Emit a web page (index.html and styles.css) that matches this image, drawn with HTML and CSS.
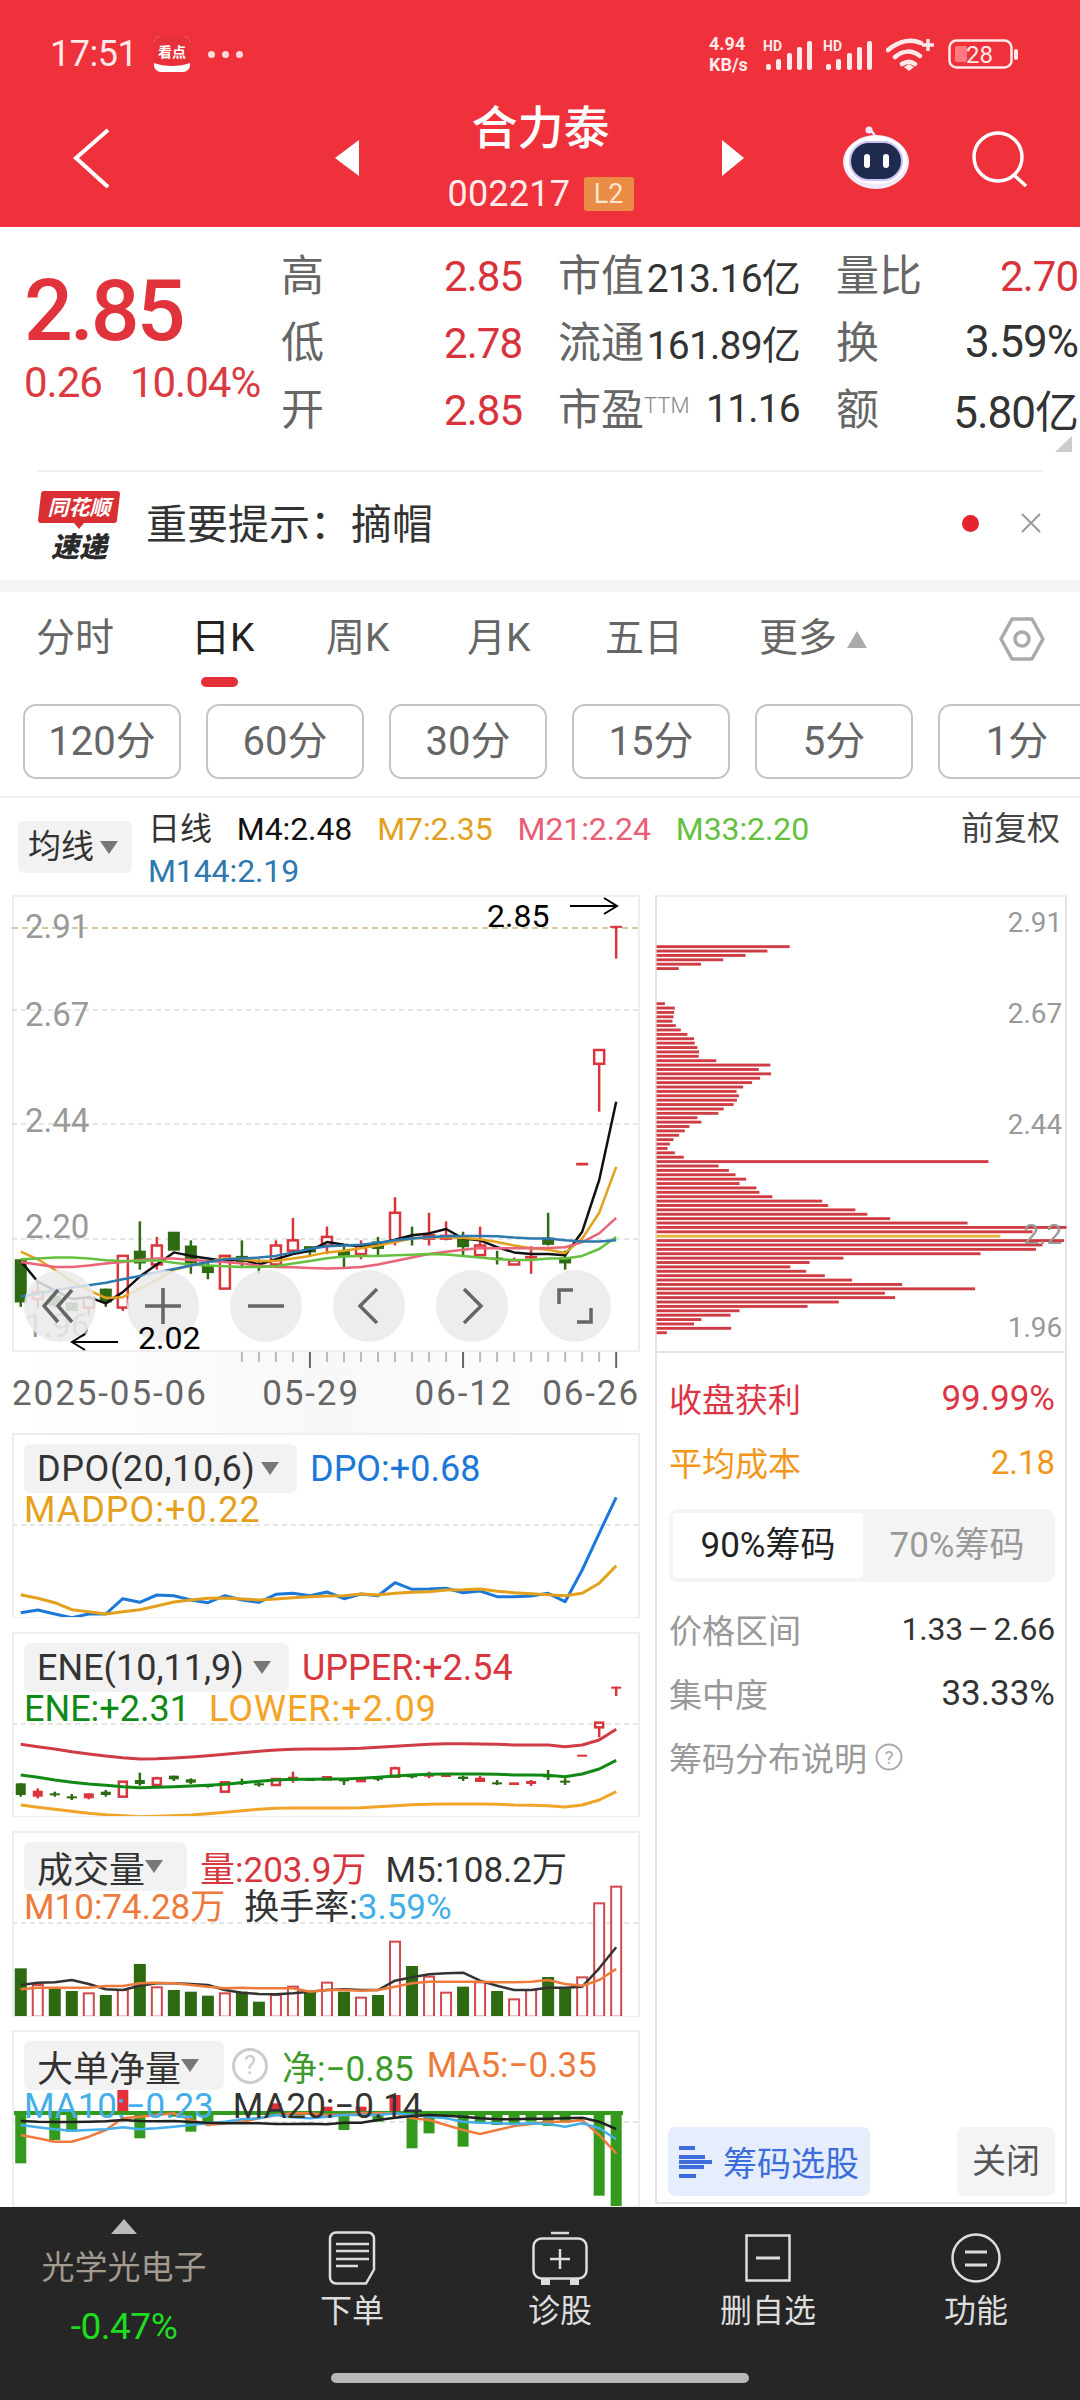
FILE: index.html
```html
<!DOCTYPE html>
<html lang="zh">
<head>
<meta charset="utf-8">
<title>合力泰</title>
<link rel="stylesheet" href="styles.css">
</head>
<body>
<div class="page">
  <header class="header">
    <div class="status">
      <span class="clock">17:51</span>
      <svg class="app-icon" width="36" height="36" viewBox="0 0 36 36"><rect width="36" height="36" rx="7" fill="#fff"/><path d="M0 7a7 7 0 0 1 7-7h22a7 7 0 0 1 7 7v20c-10 4-26 4-36 0z" fill="#e8303a"/><text x="18" y="21" class="app-text" text-anchor="middle">看点</text></svg>
      <span class="dots"><i></i><i></i><i></i></span>
      <span class="status-right">
        <span class="speed"><b>4.94</b><b>KB/s</b></span>
        <svg width="50" height="36" viewBox="0 -4 50 36"><text x="0" y="11" class="hd">HD</text><g fill="#ffe9ea"><rect x="3" y="24" width="5" height="6" rx="2"/><rect x="13" y="19" width="5" height="11" rx="2"/><rect x="24" y="13" width="5" height="17" rx="2"/><rect x="34" y="7" width="5" height="23" rx="2"/><rect x="44" y="1" width="5" height="29" rx="2"/></g></svg>
        <svg class="sig2" width="50" height="36" viewBox="0 -4 50 36"><text x="0" y="11" class="hd">HD</text><g fill="#ffe9ea"><rect x="3" y="24" width="5" height="6" rx="2"/><rect x="13" y="19" width="5" height="11" rx="2"/><rect x="24" y="13" width="5" height="17" rx="2"/><rect x="34" y="7" width="5" height="23" rx="2"/><rect x="44" y="1" width="5" height="29" rx="2"/></g></svg>
        <svg class="wifi" width="50" height="34" viewBox="0 0 50 34"><path d="M2 13C14 3 26 2 35 6M9 20c8-7 17-7 25-1M16 27c5-3 9-3 13 0" fill="none" stroke="#ffe9ea" stroke-width="4.5" stroke-linecap="round"/><path d="M18 30l5-3 5 3-5 4z" fill="#ffe9ea"/><path d="M42 2v12M36 8h12" stroke="#ffe9ea" stroke-width="3.5"/></svg>
        <svg class="battery" width="70" height="30" viewBox="0 0 70 30"><rect x="1.5" y="1.5" width="62" height="27" rx="7" fill="none" stroke="#ffe9ea" stroke-width="2.5"/><rect x="7" y="7" width="12" height="16" rx="2" fill="#ff7a80"/><text x="18" y="24" class="bat-text">28</text><rect x="66" y="10" width="4" height="11" rx="2" fill="#ffe9ea"/></svg>
      </span>
    </div>
    <div class="navbar">
      <svg class="back" width="37" height="61" viewBox="0 0 37 61"><path d="M35 2L3 30l32 29" fill="none" stroke="#fff" stroke-width="4"/></svg>
      <svg class="prev" width="24" height="36" viewBox="0 0 24 36"><path d="M24 0v36L0 18z" fill="#fff"/></svg>
      <div class="title-col">
        <div class="title">合力泰</div>
        <div class="code-row"><span class="code">002217</span><span class="l2">L2</span></div>
      </div>
      <svg class="next" width="22" height="36" viewBox="0 0 22 36"><path d="M0 0v36l22-18z" fill="#fff"/></svg>
      <svg class="robot" width="68" height="64" viewBox="0 0 68 64"><path d="M33 12c0-3-1-5-5-8" fill="none" stroke="#f1e8ff" stroke-width="2.5"/><circle cx="27" cy="4" r="3.5" fill="#f1e8ff"/><ellipse cx="34" cy="36" rx="33" ry="27" fill="#f0ecfb"/><ellipse cx="34" cy="34" rx="31" ry="24" fill="#fff"/><rect x="8" y="16" width="52" height="38" rx="19" fill="#1e2b4e" stroke="#c9c2f2" stroke-width="2"/><rect x="22" y="28" width="6" height="14" rx="3" fill="#fff"/><rect x="41" y="28" width="6" height="14" rx="3" fill="#fff"/></svg>
      <svg class="search" width="56" height="56" viewBox="0 0 56 56"><circle cx="26" cy="26" r="24" fill="none" stroke="#fff" stroke-width="3.5"/><path d="M42 44l12 11" stroke="#fff" stroke-width="3.5"/></svg>
    </div>
  </header>

  <section class="quote">
    <div class="price-block">
      <div class="price">2.85</div>
      <div class="change"><span>0.26</span><span>10.04%</span></div>
    </div>
    <div class="stats">
      <div class="stat"><span class="lab">高</span><span class="red">2.85</span></div>
      <div class="stat"><span class="lab">市值</span><span class="dark">213.16亿</span></div>
      <div class="stat"><span class="lab">量比</span><span class="red">2.70</span></div>
      <div class="stat"><span class="lab">低</span><span class="red">2.78</span></div>
      <div class="stat"><span class="lab">流通</span><span class="dark">161.89亿</span></div>
      <div class="stat"><span class="lab">换</span><span class="dark wide">3.59%</span></div>
      <div class="stat"><span class="lab">开</span><span class="red">2.85</span></div>
      <div class="stat"><span class="lab">市盈<sup class="ttm">TTM</sup></span><span class="dark">11.16</span></div>
      <div class="stat"><span class="lab">额</span><span class="dark wide">5.80亿</span></div>
    </div>
    <span class="corner"></span>
  </section>

  <section class="notice">
    <svg class="logo" width="84" height="78" viewBox="0 0 84 78"><path d="M7 0h73a3 3 0 0 1 3 3l-3 26a3 3 0 0 1-3 3H47l-5 6-5-6H4a3 3 0 0 1-3-3L4 3a3 3 0 0 1 3-3z" fill="#d92f32"/><text x="42" y="24" class="logo-top" text-anchor="middle">同花顺</text><text x="42" y="66" class="logo-bottom" text-anchor="middle">速递</text></svg>
    <span class="notice-text">重要提示：摘帽</span>
    <span class="notice-dot"></span>
    <svg class="notice-x" width="22" height="22" viewBox="0 0 22 22"><path d="M2 2l18 18M20 2L2 20" stroke="#999" stroke-width="2"/></svg>
  </section>
  <div class="band"></div>

  <nav class="tabs">
    <span class="tab">分时</span>
    <span class="tab active">日K</span>
    <span class="tab">周K</span>
    <span class="tab">月K</span>
    <span class="tab">五日</span>
    <span class="tab">更多<i class="up-tri"></i></span>
    <svg class="gear" width="46" height="44" viewBox="0 0 46 44"><path d="M13 2h20l11 20-11 20H13L2 22z" fill="none" stroke="#aaa" stroke-width="3.5" stroke-linejoin="round"/><circle cx="23" cy="22" r="7" fill="none" stroke="#aaa" stroke-width="3.5"/></svg>
  </nav>
  <div class="pills">
    <span class="pill">120分</span><span class="pill">60分</span><span class="pill">30分</span><span class="pill">15分</span><span class="pill">5分</span><span class="pill">1分</span>
  </div>

  <div class="legend">
    <span class="ma-pill">均线<i class="tri"></i></span>
    <div class="ma-values">
      <div class="ma-line"><span class="c-dark">日线</span><span class="c-black">M4:2.48</span><span class="c-m7">M7:2.35</span><span class="c-m21">M21:2.24</span><span class="c-m33">M33:2.20</span></div>
      <div class="ma-line"><span class="c-m144">M144:2.19</span></div>
    </div>
    <span class="adjust">前复权</span>
  </div>

  <div class="content">
    <div class="left-col">
      <div class="main-chart">
        <svg id="main" class="chart-svg" width="628" height="457" viewBox="12 895 628 457">
          <text x="25" y="938" class="axis">2.91</text>
          <text x="25" y="1026" class="axis">2.67</text>
          <text x="25" y="1132" class="axis">2.44</text>
          <text x="25" y="1238" class="axis">2.20</text>
          <text x="25" y="1337" class="axis">1.96</text>
          <text x="487" y="927" class="mark">2.85</text>
          <path d="M570 906h46m-12-8l13 8-13 8" fill="none" stroke="#000" stroke-width="2"/>
        </svg>
        <div class="chart-btns">
          <span class="cbtn"><svg width="36" height="36" viewBox="0 0 36 36"><path d="M16 2L2 18l14 16M30 2L16 18l14 16" fill="none" stroke="#666" stroke-width="3.5"/></svg></span>
          <span class="cbtn"><svg width="36" height="36" viewBox="0 0 36 36"><path d="M18 0v36M0 18h36" stroke="#666" stroke-width="3.5"/></svg></span>
          <span class="cbtn"><svg width="36" height="36" viewBox="0 0 36 36"><path d="M0 18h36" stroke="#666" stroke-width="3.5"/></svg></span>
          <span class="cbtn"><svg width="36" height="36" viewBox="0 0 36 36"><path d="M26 1L9 18l17 17" fill="none" stroke="#666" stroke-width="3.5"/></svg></span>
          <span class="cbtn"><svg width="36" height="36" viewBox="0 0 36 36"><path d="M10 1l17 17-17 17" fill="none" stroke="#666" stroke-width="3.5"/></svg></span>
          <span class="cbtn"><svg width="36" height="36" viewBox="0 0 36 36"><path d="M16 2H2v14M20 34h14V20" fill="none" stroke="#666" stroke-width="3.5"/></svg></span>
        </div>
        <svg class="chart-svg low-mark" width="628" height="470" viewBox="12 895 628 470">
          <text x="138" y="1349" class="mark">2.02</text>
          <path d="M118 1342H73m12-8l-13 8 13 8" fill="none" stroke="#000" stroke-width="2"/>
        </svg>
      </div>
      <div class="date-axis">
        <svg id="ticks" class="ticks" width="628" height="18" viewBox="12 1352 628 18"></svg>
        <div class="dates"><span class="d1">2025-05-06</span><span class="d2">05-29</span><span class="d3">06-12</span><span class="d4">06-26</span></div>
      </div>

      <div class="panel p-dpo">
        <svg id="dpo" class="chart-svg" width="628" height="185" viewBox="12 1433 628 185"></svg>
        <div class="plg">
          <div class="plg-row"><span class="ind-pill pw-dpo">DPO(20,10,6)<i class="tri"></i></span><span class="c-blue">DPO:+0.68</span></div>
          <div class="plg-row2"><span class="c-orange tracked">MADPO:+0.22</span></div>
        </div>
      </div>
      <div class="panel p-ene">
        <svg id="ene" class="chart-svg" width="628" height="185" viewBox="12 1632 628 185"></svg>
        <div class="plg">
          <div class="plg-row"><span class="ind-pill pw-ene">ENE(10,11,9)<i class="tri"></i></span><span class="c-red">UPPER:+2.54</span></div>
          <div class="plg-row2"><span class="c-green">ENE:+2.31</span><span class="c-lower tracked">LOWER:+2.09</span></div>
        </div>
      </div>
      <div class="panel p-vol">
        <svg id="vol" class="chart-svg" width="628" height="186" viewBox="12 1831 628 186"></svg>
        <div class="plg plg-tight">
          <div class="plg-row"><span class="ind-pill pw-vol">成交量<i class="tri"></i></span><span class="c-red">量:203.9万</span><span class="c-dark m5">M5:108.2万</span></div>
          <div class="plg-row2"><span class="c-m10">M10:74.28万</span><span class="c-dark">换手率:<span class="c-sky">3.59%</span></span></div>
        </div>
      </div>
      <div class="panel p-net">
        <svg id="net" class="chart-svg" width="628" height="177" viewBox="12 2030 628 177"></svg>
        <div class="plg plg-tight">
          <div class="plg-row"><span class="ind-pill pw-net">大单净量<i class="tri"></i></span><svg class="qmark" width="38" height="38" viewBox="0 0 38 38"><circle cx="19" cy="19" r="16.5" fill="none" stroke="#ccc" stroke-width="3"/><text x="19" y="27" class="q-text" text-anchor="middle">?</text></svg><span class="c-net">净:−0.85</span><span class="c-m10">MA5:−0.35</span></div>
          <div class="plg-row2"><span class="c-sky2">MA10:−0.23</span><span class="c-dark">MA20:−0.14</span></div>
        </div>
      </div>
    </div>

    <aside class="right-col">
      <svg id="chips" class="chips" width="412" height="456" viewBox="655 895 412 456"></svg>
      <div class="info">
        <div class="info-row profit"><span>收盘获利</span><span class="num">99.99%</span></div>
        <div class="info-row cost"><span>平均成本</span><span>2.18</span></div>
        <div class="segment"><span class="seg on">90%筹码</span><span class="seg">70%筹码</span></div>
        <div class="info-row plain"><span>价格区间</span><span class="v range">1.33 – 2.66</span></div>
        <div class="info-row plain"><span>集中度</span><span class="v num">33.33%</span></div>
        <div class="info-row plain note"><span>筹码分布说明</span><svg width="28" height="28" viewBox="0 0 28 28"><circle cx="14" cy="14" r="12.5" fill="none" stroke="#aaa" stroke-width="2"/><text x="14" y="21" class="q-small" text-anchor="middle">?</text></svg></div>
      </div>
      <div class="actions">
        <span class="pick"><svg width="34" height="32" viewBox="0 0 34 32"><g fill="#3d6ddb"><rect width="16" height="4"/><rect y="9" width="26" height="4"/><rect y="14" width="33" height="4"/><rect y="19" width="25" height="4"/><rect y="28" width="17" height="4"/></g></svg>筹码选股</span>
        <span class="close">关闭</span>
      </div>
    </aside>
  </div>

  <footer class="bottom">
    <div class="bottom-row">
      <div class="sector"><i class="sector-tri"></i><span class="sector-name">光学光电子</span><span class="sector-pct">-0.47%</span></div>
      <div class="act">
        <svg width="48" height="54" viewBox="0 0 48 54"><path d="M8 1.5h32a6 6 0 0 1 6 6v31l-8 14H8a6 6 0 0 1-6-6v-39a6 6 0 0 1 6-6z" fill="none" stroke="#ddd" stroke-width="2.5"/><path d="M8 13h33M8 20h33M8 28h33M8 35h22" stroke="#ddd" stroke-width="2.5"/></svg>
        <span>下单</span>
      </div>
      <div class="act">
        <svg width="56" height="54" viewBox="0 0 56 54"><path d="M19 2h18" stroke="#ddd" stroke-width="2.5"/><rect x="1.5" y="7.5" width="53" height="40" rx="8" fill="none" stroke="#ddd" stroke-width="2.5"/><path d="M28 18v20M18 28h20" stroke="#ddd" stroke-width="2.5"/><path d="M9 48h9v6H9zM38 48h9v6h-9z" fill="#ddd"/></svg>
        <span>诊股</span>
      </div>
      <div class="act">
        <svg width="46" height="54" viewBox="0 0 46 54"><rect x="1.5" y="4.5" width="43" height="45" fill="none" stroke="#ddd" stroke-width="2.5"/><path d="M11 27h24" stroke="#ddd" stroke-width="3"/></svg>
        <span>删自选</span>
      </div>
      <div class="act">
        <svg width="50" height="54" viewBox="0 0 50 54"><circle cx="25" cy="27" r="23.5" fill="none" stroke="#ddd" stroke-width="2.5"/><path d="M14 21h22M14 34h22" stroke="#ddd" stroke-width="3"/></svg>
        <span>功能</span>
      </div>
    </div>
    <div class="home-bar"></div>
  </footer>
</div>
<script src="chart.js"></script>
</body>
</html>
```

FILE: styles.css
```css
* { box-sizing: border-box; }
html, body { margin: 0; padding: 0; background: #fff; }
body { font-family: Roboto, "Noto Sans CJK SC", sans-serif; color: #333; }
.page { width: 1080px; height: 2400px; overflow: hidden; position: relative; background: #fff; }
i { font-style: normal; }

/* header */
.header { height: 227px; background: #ee313b; color: #fff; }
.status { height: 100px; padding: 8px 0 0 50px; display: flex; align-items: center; }
.clock { font-size: 36px; color: #ffe9ea; width: 104px; letter-spacing: -.5px; }
.app-icon { margin-right: 18px; }
.app-text { font: 700 14px "Noto Sans CJK SC", sans-serif; fill: #fff; }
.dots { display: flex; gap: 7px; }
.dots i { width: 7px; height: 7px; border-radius: 50%; background: #ffd9dc; }
.status-right { margin-left: auto; display: flex; align-items: center; padding-right: 62px; }
.speed { display: flex; flex-direction: column; font-size: 18px; line-height: 21px; width: 54px; color: #ffe9ea; }
.speed b { font-weight: 700; }
.hd { font: 700 14px Roboto, sans-serif; fill: #ffe9ea; }
.sig2 { margin-left: 10px; }
.wifi { margin-left: 13px; }
.battery { margin-left: 12px; }
.bat-text { font: 400 24px Roboto, sans-serif; fill: #ffe9ea; }
.navbar { height: 127px; padding: 0 0 11px 73px; display: flex; align-items: center; }
.prev { margin-left: 225px; }
.title-col { width: 363px; align-self: stretch; display: flex; flex-direction: column; align-items: center; }
.title { font-size: 46px; font-weight: 500; line-height: 56px; }
.code-row { display: flex; align-items: center; margin-top: 21px; height: 34px; }
.code { font-size: 36px; width: 136px; letter-spacing: .2px; color: #ffecec; }
.l2 { width: 50px; height: 34px; background: #e98c45; border-radius: 3px; font-size: 27px; line-height: 34px; text-align: center; color: #ffe3d0; }
.robot { margin-left: 98px; }
.search { margin-left: 62px; margin-top: 2px; }

/* quote */
.quote { height: 243px; display: flex; padding-top: 16px; position: relative; }
.price-block { width: 281px; padding-left: 24px; }
.price { font-size: 86px; font-weight: 500; line-height: 90px; color: #e0333b; margin-top: 23px; letter-spacing: -3px; }
.change { display: flex; gap: 28px; font-size: 42px; color: #dc3a42; margin-top: 4px; line-height: 46px; letter-spacing: -1px; }
.stats { width: 799px; display: grid; grid-template-columns: 241px 242px 242px; column-gap: 36px; grid-auto-rows: 67px; }
.stat { display: flex; justify-content: space-between; align-items: center; font-size: 39px; letter-spacing: -.8px; white-space: nowrap; }
.lab { font-size: 43px; color: #666; letter-spacing: 0; margin-bottom: 9px; }
.ttm { font-size: 22px; color: #888; vertical-align: 12px; line-height: 0; font-weight: 300; }
.stat .red { color: #d8333c; font-size: 42px; letter-spacing: -1px; }
.dark { color: #333; margin-bottom: 4px; }
.stat .wide { font-size: 44px; letter-spacing: -1px; }
.corner { position: absolute; right: 8px; bottom: 18px; width: 0; height: 0; border-left: 17px solid transparent; border-bottom: 16px solid #ccc; }
.notice { height: 110px; margin: 0 37px; border-top: 2px solid #eee; padding-bottom: 6px; display: flex; align-items: center; }
.logo { margin: 14px 25px 0 0; }
.logo-top { font: italic 700 21px "Noto Sans CJK SC", sans-serif; fill: #fff; }
.logo-bottom { font: italic 900 28px "Noto Sans CJK SC", sans-serif; fill: #2a2a2a; }
.notice-text { font-size: 41px; color: #333; margin-bottom: 4px; }
.notice-dot { width: 17px; height: 17px; border-radius: 50%; background: #e5252e; margin-left: auto; margin-right: 41px; }
.notice-x { margin-right: 1px; }
.band { height: 12px; background: #f5f5f5; }

/* tabs */
.tabs { height: 112px; display: grid; grid-template-columns: 155px 135px 141px 138px 154px 240px 46px; padding-left: 36px; padding-top: 23px; align-items: start; position: relative; }
.tab { font-size: 39px; line-height: 46px; color: #666; position: relative; white-space: nowrap; }
.tab.active { color: #222; }
.tab.active::after { content: ""; position: absolute; left: 10px; top: 62px; width: 37px; height: 10px; border-radius: 5px; background: #e5303a; }
.up-tri { display: inline-block; width: 0; height: 0; border-left: 10px solid transparent; border-right: 10px solid transparent; border-bottom: 17px solid #aaa; margin-left: 10px; vertical-align: 3px; }
.gear { margin-top: 2px; }
.pills { height: 94px; border-bottom: 2px solid #eee; padding-left: 23px; display: flex; gap: 25px; overflow: hidden; }
.pill { flex: 0 0 158px; height: 75px; border: 2px solid #c4c4c4; border-radius: 13px; text-align: center; font-size: 40px; line-height: 72px; color: #666; }

/* legend */
.legend { height: 97px; display: flex; position: relative; }
.ma-pill { margin: 23px 0 0 18px; width: 114px; height: 52px; background: #f2f2f2; border-radius: 6px; font-size: 33px; line-height: 50px; padding-left: 10px; color: #333; display: flex; align-items: center; gap: 4px; }
.tri { display: inline-block; width: 0; height: 0; border-left: 9px solid transparent; border-right: 9px solid transparent; border-top: 13px solid #777; margin-left: 8px; }
.ma-pill .tri { margin-left: 2px; }
.ma-values { margin: 10px 0 0 16px; font-size: 32px; line-height: 42px; letter-spacing: -.1px; }
.ma-line { display: flex; gap: 25px; }
.adjust { margin: 10px 20px 0 auto; font-size: 33px; line-height: 42px; color: #444; }
.c-dark { color: #333; }
.c-black { color: #111; }
.c-m7 { color: #e2a01c; }
.c-m21 { color: #ea5e75; }
.c-m33 { color: #66c040; }
.c-m144 { color: #2d78ae; }
.c-blue { color: #1c78d8; }
.c-orange { color: #e5a11c; }
.c-red { color: #d8363e; }
.c-green { color: #118a15; }
.c-lower { color: #f5a324; }
.c-m10 { color: #ee7a3c; }
.c-sky { color: #44aee8; }
.c-sky2 { color: #44aee8; }
.c-net { color: #3c9a2a; }

/* content */
.content { display: flex; padding-left: 12px; gap: 15px; height: 1312px; }
.left-col { width: 628px; }
.main-chart { height: 457px; position: relative; border: 2px solid #eee; }
.chart-svg { position: absolute; left: -2px; top: -2px; display: block; }
.low-mark { overflow: visible; pointer-events: none; }
.chart-btns { position: absolute; left: 10px; top: 373px; display: flex; gap: 31px; }
.cbtn { width: 72px; height: 72px; border-radius: 50%; background: rgba(234,234,234,.86); display: flex; align-items: center; justify-content: center; }
.axis { font: 400 33px Roboto, sans-serif; fill: #999; }
.mark { font: 400 32px Roboto, sans-serif; fill: #000; }
.date-axis { height: 81px; background: linear-gradient(90deg, #fff 0, #f8f8f8 50%, #fff 100%); }
.ticks { display: block; }
.dates { display: flex; font-size: 35px; line-height: 40px; color: #666; margin-top: 4px; letter-spacing: 1.9px; white-space: nowrap; }
.d1 { margin-left: 0; width: 251px; }
.d2 { width: 153px; }
.d3 { width: 128px; }
.panel { position: relative; border: 2px solid #eee; border-bottom-width: 1px; overflow: hidden; }
.p-dpo, .p-ene { height: 185px; margin-bottom: 14px; }
.p-vol { height: 186px; margin-bottom: 13px; }
.p-net { height: 177px; }
.plg { position: relative; padding: 9px 0 0 10px; font-size: 36px; white-space: nowrap; }
.plg-tight { font-size: 35px; }
.plg-row { display: flex; align-items: center; gap: 13px; height: 49px; }
.plg-row2 { display: flex; gap: 19px; height: 36px; line-height: 36px; margin-top: -1px; }
.tracked { letter-spacing: 1px; }
.ind-pill { height: 49px; background: #f2f2f2; border-radius: 7px; padding-left: 13px; display: flex; align-items: center; color: #333; font-size: 36px; }
.pw-dpo { width: 273px; letter-spacing: .6px; }
.pw-ene { width: 265px; }
.pw-vol { width: 163px; }
.pw-net { width: 200px; }
.pw-vol .tri, .pw-net .tri { margin-left: 0; }
.pw-dpo .tri { margin-left: 5px; }
.pw-ene .tri { margin-left: 9px; }
.m5 { margin-left: 6px; }
.qmark { margin-left: -6px; }
.q-text { font: 400 25px Roboto, sans-serif; fill: #ccc; }
.q-small { font: 400 19px Roboto, sans-serif; fill: #aaa; }

/* right */
.right-col { width: 412px; height: 1309px; border: 2px solid #e4e4e4; border-top-color: #eee; display: flex; flex-direction: column; }
.chips { display: block; flex: none; margin-left: -2px; border-bottom: 2px solid #e4e4e4; height: 456px; }
.info { padding: 13px 10px 0 12px; }
.info-row { display: flex; justify-content: space-between; align-items: center; height: 64px; font-size: 33px; }
.profit { color: #dc3545; }
.cost { color: #f3971c; }
.plain { color: #999; height: 64px; }
.plain .v { color: #333; }
.num { font-size: 35px; }
.range { font-size: 32px; word-spacing: -3px; letter-spacing: -.2px; }
.note { justify-content: flex-start; gap: 8px; }
.segment { margin: 15px 0; height: 73px; background: #f4f4f4; border-radius: 9px; padding: 4px; display: flex; font-size: 35px; color: #999; }
.seg { flex: 1; text-align: center; line-height: 65px; }
.seg.on { flex: 0 0 190px; background: #fff; border-radius: 4px; color: #222; }
.actions { margin-top: auto; padding: 0 10px 6px 11px; display: flex; justify-content: space-between; font-size: 34px; }
.pick { width: 202px; height: 69px; background: #e6edfd; border-radius: 7px; color: #3d6ddb; display: flex; align-items: center; justify-content: center; gap: 10px; }
.close { width: 98px; height: 69px; background: #f4f4f4; border-radius: 7px; color: #555; text-align: center; line-height: 68px; }

/* bottom */
.bottom { position: absolute; left: 0; right: 0; bottom: 0; height: 193px; background: #262626; }
.bottom-row { height: 166px; display: flex; }
.sector { width: 248px; display: flex; flex-direction: column; align-items: center; padding-top: 12px; }
.sector-tri { width: 0; height: 0; border-left: 13px solid transparent; border-right: 13px solid transparent; border-bottom: 15px solid #bbb; }
.sector-name { font-size: 33px; line-height: 44px; color: #a39a90; margin-top: 12px; }
.sector-pct { font-size: 37px; line-height: 44px; color: #1fdc1f; margin-top: 15px; letter-spacing: -.5px; }
.act { width: 208px; display: flex; flex-direction: column; align-items: center; padding-top: 24px; color: #ddd; font-size: 32px; line-height: 40px; }
.act svg { display: block; height: 54px; }
.act span { margin-top: 6px; }
.home-bar { width: 418px; height: 10px; margin: 0 auto; background: #b8b8b8; border-radius: 5px; }

/* chips */
.chip { fill: #cf3c44; }
.chip.avg { fill: #e8b23c; }
.chip-label { font: 400 28px Roboto, sans-serif; fill: #999; text-anchor: end; }
```

FILE: chart.js
```js
(function () {
  var NS = 'http://www.w3.org/2000/svg';
  var GREEN = '#2e6a12', RED = '#d8353d';
  function el(tag, attrs, parent, before) {
    var e = document.createElementNS(NS, tag);
    for (var k in attrs) e.setAttribute(k, attrs[k]);
    if (before) parent.insertBefore(e, before); else parent.appendChild(e);
    return e;
  }
  function X(i) { return (50 + 41 * i) / 2.41; }
  function line(svg, ys, toY, color, w, before) {
    var pts = ys.map(function (z, i) { return X(i).toFixed(1) + ',' + toY(z).toFixed(1); }).join(' ');
    el('polyline', { points: pts, fill: 'none', stroke: color, 'stroke-width': w, 'stroke-linejoin': 'round' }, svg, before);
  }
  function dash(svg, y, color, before) {
    el('path', { d: 'M12 ' + y + 'H640', stroke: color, 'stroke-width': 1.5, 'stroke-dasharray': '5 4' }, svg, before);
  }
  function candles(svg, data, toY, bw, before) {
    data.forEach(function (c, i) {
      var x = X(i), col = c[0] === 'g' ? GREEN : RED;
      var t = toY(c[1]), b = toY(c[2]);
      if (c[3] !== undefined) el('path', { d: 'M' + x + ' ' + toY(c[3]) + 'V' + toY(c[4]), stroke: col, 'stroke-width': 2.5 }, svg, before);
      if (c[0] === 'r') {
        el('rect', { x: x - bw / 2 + 1, y: t, width: bw - 2, height: Math.max(b - t, 1), fill: '#fff', stroke: col, 'stroke-width': 2.5 }, svg, before);
      } else {
        el('rect', { x: x - bw / 2, y: t, width: bw, height: Math.max(b - t, 2), fill: col }, svg, before);
      }
    });
  }

  /* main K chart */
  var main = document.getElementById('main');
  var firstText = main.firstElementChild;
  var mainY = function (z) { return 880 + z / 2.9; };
  el('path', { d: 'M12 928H640', stroke: '#c9b57f', 'stroke-width': 1.5, 'stroke-dasharray': '6 4' }, main, firstText);
  dash(main, 1010, '#ddd', firstText); dash(main, 1124, '#ddd', firstText); dash(main, 1239, '#ddd', firstText);
  var K = [['g',1100,1225,1100,1238],['r',1195,1215,1165,1240],['g',1205,1235,1190,1240],['g',1225,1250,1225,1250],['r',1212,1240,1205,1265],['g',1185,1225,1185,1238],['r',1090,1240,1090,1250],['g',1075,1112,990,1130],['r',1060,1115,1035,1130],['g',1020,1075],['g',1060,1112,1045,1142],['g',1118,1140,1100,1158],['r',1090,1185],['g',1090,1108,1045,1125],['g',1118,1123,1100,1142],['r',1060,1115,1045,1115],['r',1045,1075,980,1075],['g',1062,1080,1062,1088],['r',1035,1060,1005,1085],['g',1075,1090,1060,1125],['r',1060,1085,1045,1100],['g',1048,1070,1035,1088],['r',965,1045,920,1060],['g',1035,1040,1005,1060],['r',1030,1040,965,1060],['r',1032,1040,990,1045],['g',1038,1065,1020,1090],['r',1060,1088,1005,1090],['g',1095,1100,1075,1115],['r',1103,1115,1095,1115],['f',1090,1098,1062,1142],['g',1037,1058,965,1060],['g',1095,1112,1075,1130],['f',820,828],['r',493,533,533,672],['f',133,137,133,228]];
  candles(main, K, mainY, 12, firstText);
  line(main, [1105,1165,1190,1215,1210,1228,1195,1150,1115,1080,1090,1098,1105,1100,1115,1100,1085,1075,1050,1058,1062,1055,1043,1030,1025,1012,1040,1045,1065,1080,1085,1085,1088,1020,870,643], mainY, '#111', 2.5, firstText);
  line(main, [1078,1100,1130,1165,1190,1212,1210,1185,1160,1130,1118,1108,1097,1100,1105,1105,1098,1090,1080,1075,1068,1060,1050,1040,1037,1035,1038,1042,1050,1060,1068,1072,1082,1040,965,832], mainY, '#e2a01c', 2.5, firstText);
  line(main, [1108,1115,1122,1122,1118,1112,1108,1102,1098,1098,1102,1105,1108,1112,1118,1122,1123,1125,1127,1125,1122,1115,1105,1095,1085,1078,1072,1067,1068,1068,1068,1067,1065,1050,1025,980], mainY, '#ea6378', 2.5, firstText);
  line(main, [1100,1098,1095,1095,1098,1103,1105,1105,1103,1110,1115,1118,1120,1122,1122,1120,1112,1105,1097,1092,1090,1090,1088,1087,1085,1086,1090,1095,1100,1102,1102,1098,1098,1090,1070,1035], mainY, '#66c040', 2.5, firstText);
  line(main, [1208,1200,1190,1182,1175,1168,1158,1148,1138,1128,1118,1108,1100,1098,1095,1090,1080,1070,1062,1060,1058,1052,1045,1040,1035,1033,1032,1032,1033,1037,1040,1040,1045,1048,1048,1045], mainY, '#2d78ae', 2.5, firstText);

  /* date ticks */
  var ticks = document.getElementById('ticks');
  for (var t = 13; t < 36; t++) {
    var big = t === 17 || t === 26 || t === 35;
    el('path', { d: 'M' + X(t) + ' 1352V' + (big ? 1368 : 1362), stroke: big ? '#666' : '#bbb', 'stroke-width': 2 }, ticks);
  }

  /* DPO */
  var y14 = function (z) { return 1420 + z / 3; };
  var dpo = document.getElementById('dpo');
  dash(dpo, 1525, '#ddd');
  line(dpo, [578,570,582,593,582,582,536,547,525,527,540,548,527,540,547,523,520,527,516,536,522,527,488,508,507,505,518,513,530,530,528,520,545,450,340,232], y14, '#1c78d8', 3);
  line(dpo, [524,535,548,569,575,582,575,569,558,546,540,535,534,537,540,537,533,530,528,527,522,525,520,517,515,510,509,507,514,518,521,524,527,520,490,437], y14, '#e2a01c', 3);

  /* ENE */
  var ene = document.getElementById('ene');
  dash(ene, 1724, '#ddd');
  var E = [['g',1090,1125,1090,1130],['f',1112,1130,1105,1135],['g',1120,1125,1115,1130],['g',1129,1133,1122,1140],['f',1120,1135,1120,1138],['g',1115,1125,1110,1130],['r',1085,1130],['g',1080,1092,1058,1097],['r',1075,1095,1070,1075],['g',1067,1078,1067,1083],['g',1078,1088,1075,1092],['g',1095,1097,1092,1103],['r',1087,1115],['g',1085,1089,1076,1095],['g',1090,1095,1085,1100],['r',1077,1095],['f',1070,1082,1055,1088],['g',1077,1080],['f',1068,1082],['g',1078,1082,1078,1095],['f',1077,1087],['g',1073,1078,1070,1083],['r',1045,1070,1040,1045],['g',1066,1069,1062,1075],['f',1063,1070,1055,1075],['f',1065,1070],['g',1070,1077,1067,1083],['f',1073,1086,1068,1086],['g',1087,1091,1080,1095],['f',1087,1095],['f',1083,1092,1080,1098],['g',1066,1072,1050,1080],['g',1082,1088,1075,1095],['f',1004,1008],['r',908,922,922,952],['f',800,804,800,828]];
  candles(ene, E, y14, 10);
  line(ene, [973,980,987,995,1002,1008,1013,1017,1016,1014,1011,1007,1003,998,994,990,988,987,987,986,985,982,979,976,973,971,971,972,973,975,975,975,980,975,960,928], y14, '#cf3c44', 3);
  line(ene, [1065,1072,1080,1087,1092,1096,1100,1103,1102,1100,1098,1096,1093,1088,1084,1080,1078,1078,1077,1077,1075,1072,1068,1065,1063,1062,1062,1062,1063,1065,1065,1066,1070,1062,1047,1021], y14, '#118a15', 3);
  line(ene, [1155,1162,1168,1174,1180,1184,1187,1190,1189,1187,1185,1181,1177,1172,1168,1165,1164,1164,1164,1164,1163,1160,1157,1154,1153,1152,1152,1152,1153,1155,1156,1157,1161,1155,1140,1115], y14, '#f0a428', 3);

  /* Volume */
  var y18 = function (z) { return 1820 + z / 3; };
  var vol = document.getElementById('vol');
  dash(vol, 1923, '#ddd');
  var vt = [445,495,505,513,520,525,510,432,502,510,515,527,520,515,545,525,500,515,488,515,533,525,365,438,470,518,500,487,513,538,510,471,505,472,250,200];
  var vk = 'grggrgrgrgggrggrrgrgrgrgrrgrgrrggrrr';
  vt.forEach(function (z, i) {
    var k = vk.charAt(i), x = X(i), top = y18(z), base = y18(590);
    if (k === 'g') el('rect', { x: x - 6, y: top, width: 12, height: base - top, fill: GREEN }, vol);
    else el('rect', { x: x - 5, y: top, width: 10, height: base - top, fill: '#fff', stroke: '#d2484f', 'stroke-width': 2 }, vol);
  });
  line(vol, [495,488,487,480,492,508,510,497,490,490,492,495,510,518,522,523,520,515,510,508,510,510,482,472,463,460,458,482,497,510,510,503,503,500,445,382], y18, '#333', 2.5);
  line(vol, [508,503,503,503,503,498,498,490,488,490,495,500,505,503,505,505,505,515,510,510,512,510,500,490,485,485,485,485,487,487,485,480,492,497,480,447], y18, '#ee7a3c', 2.5);

  /* Net */
  var net = document.getElementById('net');
  dash(net, 2122, '#ddd');
  var NGREEN = '#339a1e', NRED = '#e5303a';
  var nb = [1030,885,960,935,885,885,800,955,885,890,935,905,880,885,885,850,885,885,860,930,860,905,825,985,940,885,980,910,915,915,905,918,908,885,1127,1200];
  var zero = 877;
  nb.forEach(function (z, i) {
    var x = X(i);
    if (z < zero) el('rect', { x: x - 5.5, y: y18(z), width: 11, height: y18(zero) - y18(z), fill: NRED }, net);
    else el('rect', { x: x - 5.5, y: y18(zero), width: 11, height: y18(z) - y18(zero), fill: NGREEN }, net);
  });
  el('rect', { x: 12, y: y18(873), width: 611, height: 4, fill: NGREEN }, net);
  line(net, [945,955,965,965,950,930,895,890,885,880,900,915,910,905,895,885,880,880,885,885,880,880,880,895,900,915,930,942,930,918,912,905,905,900,945,1000], y18, '#ee7a3c', 2.5);
  line(net, [915,922,928,932,930,928,922,928,925,920,915,910,905,898,895,885,892,895,890,885,885,885,880,885,890,895,905,908,910,912,910,912,920,910,925,958], y18, '#44aee8', 2.5);
  line(net, [903,905,906,906,905,904,900,903,904,903,906,908,910,910,910,912,912,911,913,908,908,900,893,888,885,887,890,895,898,898,896,896,895,893,905,927], y18, '#222', 2.5);

  /* Chip distribution */
  var chips = document.getElementById('chips');
  function bar(z, end, cls) {
    var xs = 655.7, w = end / 3 + 640 - xs;
    el('rect', { x: xs, y: 880 + z / 2.9 - 1.4, width: w, height: 2.9, 'class': cls }, chips);
  }
  [448,381,315,248,181,114].forEach(function (e, i) { bar(188 + 12.77 * i, e, 'chip'); });
  [72,102,100,98,95,105,120,140,160,162,170,175,174,227,390,355,392,359,335,308,288,295,289,279,249,233,170,182,146,132,115,98,87,80,102,129,1047,234,265,285,317,297,348,357,396,546,564,646,682,751,984,1282,1180,1083,1275,1210,1190,1023,610,508,450,498,554,636,787,1007,735,766,596,502,297,270,182,160,272,78].forEach(function (e, i) {
    bar(354 + 12.78 * i, e, i === 53 ? 'chip avg' : 'chip');
  });
  [['2.91', 930], ['2.67', 1022], ['2.44', 1133], ['2.2', 1244], ['1.96', 1337]].forEach(function (l) {
    var t = el('text', { x: 1063, y: l[1], 'class': 'chip-label' }, chips);
    t.textContent = l[0];
  });
})();
```
